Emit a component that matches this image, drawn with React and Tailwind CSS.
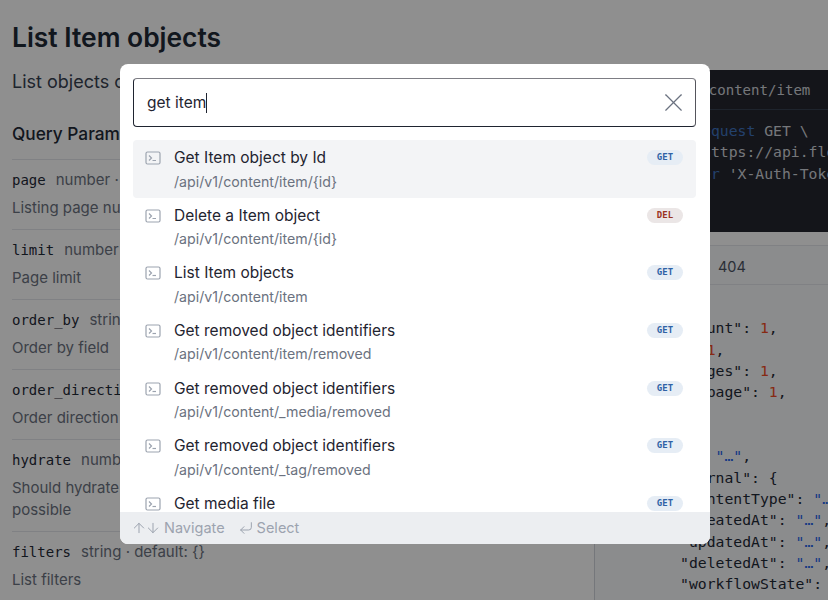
import React from 'react';
import { X, ArrowUp, ArrowDown, CornerDownLeft } from 'lucide-react';

const params = [
    { name: 'page', meta: 'number · default: 1', desc: 'Listing page number' },
    { name: 'limit', meta: 'number · default: 20', desc: 'Page limit' },
    { name: 'order_by', meta: 'string', desc: 'Order by field' },
    { name: 'order_direction', meta: 'string', desc: 'Order direction' },
    { name: 'hydrate', meta: 'number · default: 0', desc: 'Should hydrate relations of object, for read operation only. Use it only when possible' },
    { name: 'filters', meta: 'string · default: {}', desc: 'List filters' },
];

const results = [
    { title: 'Get Item object by Id', path: '/api/v1/content/item/{id}', method: 'GET', active: true },
    { title: 'Delete a Item object', path: '/api/v1/content/item/{id}', method: 'DEL' },
    { title: 'List Item objects', path: '/api/v1/content/item', method: 'GET' },
    { title: 'Get removed object identifiers', path: '/api/v1/content/item/removed', method: 'GET' },
    { title: 'Get removed object identifiers', path: '/api/v1/content/_media/removed', method: 'GET' },
    { title: 'Get removed object identifiers', path: '/api/v1/content/_tag/removed', method: 'GET' },
    { title: 'Get media file', path: '/api/v1/content/_media/file/{id}', method: 'GET' },
];

const mono = "font-['DejaVu_Sans_Mono',monospace]";

const TerminalIcon = () => (
    <svg width="16" height="14" viewBox="0 0 16 14" fill="none" stroke="#9ca3af" strokeWidth="1.2" className="shrink-0 mt-[3px]">
        <rect x="1" y="1" width="14" height="12" rx="1.5" />
        <path d="M4 4.5 L6.5 7 L4 9.5" />
        <path d="M7.5 9.5 H11" />
    </svg>
);

const Result = ({ item }) => (
    <div className={`flex h-[57.67px] shrink-0 pl-[12px] pr-[13px] pt-[8px] gap-[13px] rounded ${item.active ? 'bg-[#f3f4f6]' : ''}`}>
        <TerminalIcon />
        <div className="flex-1 min-w-0">
            <div className="text-[15.5px] leading-[20px] font-normal text-[#1f2430]">{item.title}</div>
            <div className="text-[14.2px] leading-[20px] mt-[3.5px] text-[#6b7280]">{item.path}</div>
        </div>
        <div className={`${mono} h-[15px] w-[36px] mt-[2px] rounded-full text-[9px] leading-[15px] font-bold text-center ${item.method === 'DEL' ? 'bg-[#ebe6e6] text-[#9a3322]' : 'bg-[#e6edf5] text-[#2f62a5]'}`}>
            {item.method}
        </div>
    </div>
);

export default function App() {
    return (
        <div className="relative h-[600px] w-[828px] overflow-hidden bg-white font-['Inter',sans-serif]">
            <div className="flex h-full">
                <div className="w-[594px] shrink-0 px-[12px] pt-[18px]">
                    <h1 className="text-[26.4px] leading-[38px] font-semibold text-[#1f2937]">List Item objects</h1>
                    <p className="mt-[13px] text-[18px] leading-[26px] text-[#374151]">List objects of the Item content type</p>
                    <h2 className="mt-[27px] text-[17.3px] leading-[24px] font-medium text-[#1f2937]">Query Parameters</h2>
                    <div className="mt-[13px] border-t border-[#e5e7eb]">
                        {params.map(p => (
                            <div key={p.name} className="border-b border-[#e5e7eb] pt-[9px] pb-[10px] last:border-b-0">
                                <div className="flex items-baseline gap-[10px] leading-[21px]">
                                    <span className={`${mono} text-[14px] text-[#1f2937]`}>{p.name}</span>
                                    <span className="text-[15px] text-[#6b7280]">{p.meta}</span>
                                </div>
                                <div className="mt-[6px] text-[15px] leading-[22px] text-[#6b7280]">{p.desc}</div>
                            </div>
                        ))}
                    </div>
                </div>
                <div className={`${mono} flex-1 min-w-0 text-[14.75px] pt-[70px]`}>
                    <div className="h-[162px] bg-[#25262f] text-[#d1d5db] overflow-hidden">
                        <div className="h-[40px] border-b border-[#374151] pl-[47px] text-[14.07px] leading-[40px] whitespace-nowrap">/api/v1/content/item</div>
                        <div className="pl-[37px] pt-[10px] leading-[21.33px] whitespace-pre">
                            <div>curl <span className="text-[#3f74c0]">--request</span> GET \</div>
                            <div>  <span className="text-[#3f74c0]">--url</span> https://api.flotiq.com</div>
                            <div>  <span className="text-[#3f74c0]">--header</span> 'X-Auth-Token'</div>
                        </div>
                    </div>
                    <div className="mt-[13px] h-[40px] border-y border-l border-[#e5e7eb] bg-[#f8f9fb] flex items-center pl-[123px] pt-[3px] font-['Inter',sans-serif] text-[14.5px] text-[#4b5563]">404</div>
                    <div className="pl-[14px] pt-[11px] leading-[21.33px] whitespace-pre bg-[#f8f9fb] h-full border-l border-[#d1d5db] text-[#1f2937]">
                        <div>{'{'}</div>
                        <div>  "total_count": <span className="text-[#f04a24]">1</span>,</div>
                        <div>  "count": <span className="text-[#f04a24]">1</span>,</div>
                        <div>  "total_pages": <span className="text-[#f04a24]">1</span>,</div>
                        <div>  "current_page": <span className="text-[#f04a24]">1</span>,</div>
                        <div>  "data": [</div>
                        <div>    {'{'}</div>
                        <div>      "id": <span className="text-[#2563eb]">"…"</span>,</div>
                        <div>      "internal": {'{'}</div>
                        <div>        "contentType": <span className="text-[#2563eb]">"…"</span>,</div>
                        <div>        "createdAt": <span className="text-[#2563eb]">"…"</span>,</div>
                        <div>        "updatedAt": <span className="text-[#2563eb]">"…"</span>,</div>
                        <div>        "deletedAt": <span className="text-[#2563eb]">"…"</span>,</div>
                        <div>        "workflowState": <span className="text-[#2563eb]">"…"</span>,</div>
                    </div>
                </div>
            </div>

            <div className="absolute inset-0 bg-black/44 flex justify-center items-start pt-[64px] pl-[2px]">
                <div className="w-[590px] h-[480px] bg-white rounded-lg overflow-hidden flex flex-col">
                    <div className="ml-[13px] mr-[14px] mt-[14px] h-[49px] shrink-0 rounded border border-[#1f2430] border-t-[#7d7d84] border-r-[#55555c] flex items-center pl-[13px] pr-[6px]">
                        <span className="text-[15.5px] text-[#1f2430] border-r border-[#1f2430] leading-[20px]">get item</span>
                        <X size={31} strokeWidth={0.9} className="ml-auto text-[#6b7280]" />
                    </div>
                    <div className="mt-[13px] ml-[13px] mr-[14px] flex-1 min-h-0 overflow-hidden flex flex-col">
                        {results.map((item, i) => <Result key={i} item={item} />)}
                    </div>
                    <div className="h-[32px] shrink-0 bg-[#eceef1] flex items-center pl-[11px] text-[14.5px] text-[#9ca3af]">
                        <ArrowUp size={16} strokeWidth={1.5} />
                        <ArrowDown size={16} strokeWidth={1.5} className="-ml-[2px]" />
                        <span className="ml-[3px]">Navigate</span>
                        <CornerDownLeft size={16} strokeWidth={1.5} className="ml-[13px]" />
                        <span className="ml-[3px]">Select</span>
                    </div>
                </div>
            </div>
        </div>
    );
}
